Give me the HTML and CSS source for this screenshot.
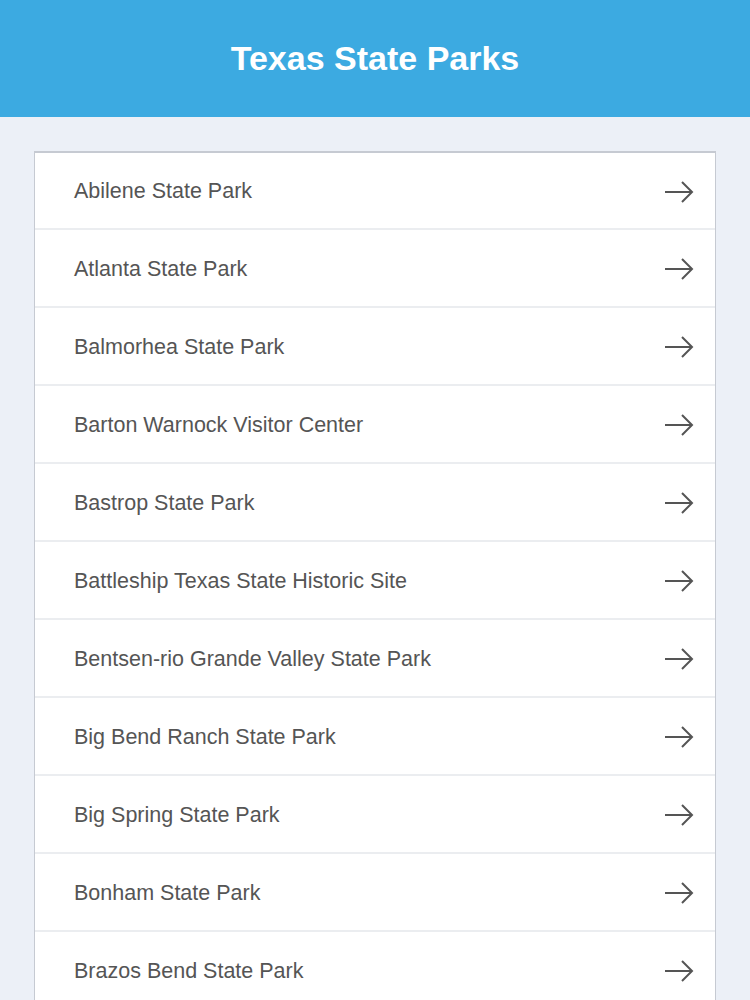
FILE: index.html
```html
<!DOCTYPE html>
<html lang="en-us">
    <head>
        <meta charset="UTF-8">
        <title>Texas State Parks</title>
        <link rel="stylesheet" href="styles.css">
    </head>
    <body>
        <div class="header">
            <h1>Texas State Parks</h1>
        </div>
        <div class="main">
            <ul class="parks">
                <li><span>Abilene State Park</span><svg class="arrow" viewBox="0 0 30 24"><path d="M1 12H28M18 2L28 12L18 22"/></svg></li>
                <li><span>Atlanta State Park</span><svg class="arrow" viewBox="0 0 30 24"><path d="M1 12H28M18 2L28 12L18 22"/></svg></li>
                <li><span>Balmorhea State Park</span><svg class="arrow" viewBox="0 0 30 24"><path d="M1 12H28M18 2L28 12L18 22"/></svg></li>
                <li><span>Barton Warnock Visitor Center</span><svg class="arrow" viewBox="0 0 30 24"><path d="M1 12H28M18 2L28 12L18 22"/></svg></li>
                <li><span>Bastrop State Park</span><svg class="arrow" viewBox="0 0 30 24"><path d="M1 12H28M18 2L28 12L18 22"/></svg></li>
                <li><span>Battleship Texas State Historic Site</span><svg class="arrow" viewBox="0 0 30 24"><path d="M1 12H28M18 2L28 12L18 22"/></svg></li>
                <li><span>Bentsen-rio Grande Valley State Park</span><svg class="arrow" viewBox="0 0 30 24"><path d="M1 12H28M18 2L28 12L18 22"/></svg></li>
                <li><span>Big Bend Ranch State Park</span><svg class="arrow" viewBox="0 0 30 24"><path d="M1 12H28M18 2L28 12L18 22"/></svg></li>
                <li><span>Big Spring State Park</span><svg class="arrow" viewBox="0 0 30 24"><path d="M1 12H28M18 2L28 12L18 22"/></svg></li>
                <li><span>Bonham State Park</span><svg class="arrow" viewBox="0 0 30 24"><path d="M1 12H28M18 2L28 12L18 22"/></svg></li>
                <li><span>Brazos Bend State Park</span><svg class="arrow" viewBox="0 0 30 24"><path d="M1 12H28M18 2L28 12L18 22"/></svg></li>
            </ul>
        </div>
    </body>
</html>
```

FILE: styles.css
```css
body {
    margin: 0;
    background-color: #ECF0F7;
    font-family: "Liberation Sans", Arial, sans-serif;
    overflow: hidden;
}
.header {
    background-color: #3CAAE1;
    height: 117px;
    display: flex;
    align-items: center;
    justify-content: center;
}
.header h1 {
    margin: 0;
    color: #FFFFFF;
    font-size: 34px;
    font-weight: bold;
}
.main {
    padding: 34px 34px 0 34px;
}
.parks {
    list-style: none;
    margin: 0;
    padding: 0;
    background-color: #FFFFFF;
    border: 1px solid #C6CAD2;
    border-top-width: 2px;
}
.parks li {
    height: 76px;
    display: flex;
    align-items: center;
    justify-content: space-between;
    padding: 2px 21px 0 39px;
    box-sizing: border-box;
    height: 78px;
    border-bottom: 2px solid #EBEDF0;
    color: #555555;
    font-size: 21.5px;
}
.parks li:first-child {
    height: 77px;
}
.arrow {
    width: 30px;
    height: 24px;
    fill: none;
    stroke: #555555;
    stroke-width: 2;
}
```
